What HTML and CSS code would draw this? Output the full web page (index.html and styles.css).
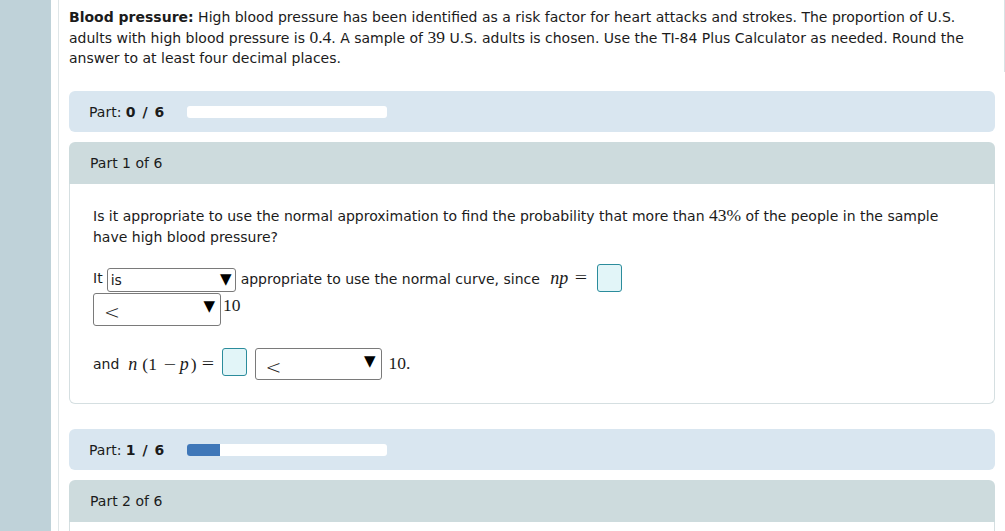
FILE: index.html
```html
<!DOCTYPE html>
<html>
<head>
<meta charset="utf-8">
<link rel="stylesheet" href="styles.css">
</head>
<body>
<div class="sidebar"></div>
<div class="main">
  <div class="intro">
    <p><b>Blood pressure:</b> High blood pressure has been identified as a risk factor for heart attacks and strokes. The proportion of U.S. adults with high blood pressure is <span class="m">0.4</span>. A sample of <span class="m">39</span> U.S. adults is chosen. Use the TI-84 Plus Calculator as needed. Round the answer to at least four decimal places.</p>
  </div>

  <div class="progress">
    <span class="plabel">Part: <b>0 / 6</b></span>
    <div class="track"><div class="fill" style="width:0%"></div></div>
  </div>

  <div class="part">
    <div class="phead">Part 1 of 6</div>
    <div class="pbody">
      <p class="q">Is it appropriate to use the normal approximation to find the probability that more than <span class="m">43%</span> of the people in the sample have high blood pressure?</p>
      <div class="row r1">
        <span>It</span>
        <span class="sel sel-a"><span class="sv">is</span><span class="tri">&#9660;</span></span>
        <span class="txt">appropriate to use the normal curve, since <span class="mi">np</span></span>
        <span class="m eq">=</span>
        <span class="inp inp-a"></span>
      </div>
      <div class="row r2">
        <span class="sel sel-b"><span class="sv lt">&lt;</span><span class="tri">&#9660;</span></span>
        <span class="m ten">10</span>
      </div>
      <div class="row r3">
        <span>and</span>
        <span class="expr"><span class="mi">n</span><span class="m po">(1</span><span class="m minus">&#8722;</span><span class="mi pp">p</span><span class="m pc">)</span></span>
        <span class="m eq">=</span>
        <span class="inp inp-b"></span>
        <span class="sel sel-c"><span class="sv lt">&lt;</span><span class="tri">&#9660;</span></span>
        <span class="m ten">10.</span>
      </div>
    </div>
  </div>

  <div class="progress second">
    <span class="plabel">Part: <b>1 / 6</b></span>
    <div class="track"><div class="fill" style="width:16.67%"></div></div>
  </div>

  <div class="part">
    <div class="phead">Part 2 of 6</div>
    <div class="pbody short"></div>
  </div>
</div>
</body>
</html>
```
FILE: styles.css
```css
html, body {
  margin: 0;
  padding: 0;
  height: 100%;
  overflow: hidden;
}
body {
  display: flex;
  background: #fff;
  font-family: "DejaVu Sans", Verdana, sans-serif;
  font-size: 14px;
  color: #1b1b1b;
}
.sidebar {
  width: 51px;
  flex: none;
  background: #bfd2d9;
}
.main {
  flex: 1;
  margin-left: 7px;
  border-left: 1px solid #dfe6e8;
}
.intro {
  padding: 7px 0 0 10px;
  height: 65px;
  border-right: 1px solid #d9e2e5;
}
.intro p {
  margin: 0;
  line-height: 20.5px;
  width: 920px;
}
.m {
  font-family: "Liberation Serif", "Times New Roman", serif;
  font-size: 17.5px;
  line-height: 1;
}
.mi {
  font-family: "Liberation Serif", "Times New Roman", serif;
  font-style: italic;
  font-size: 18px;
  line-height: 1;
}
.progress {
  margin: 19px 10px 0 10px;
  height: 41px;
  background: #d9e6f0;
  border-radius: 6px;
  display: flex;
  align-items: center;
  padding-left: 20px;
}
.progress.second {
  margin-top: 25px;
}
.plabel {
  width: 98px;
  font-size: 14px;
}
.plabel b {
  word-spacing: 2px;
}
.track {
  width: 200px;
  height: 12px;
  background: #fff;
  border-radius: 3px;
  overflow: hidden;
}
.fill {
  height: 100%;
  background: #3f77b8;
}
.part {
  margin: 10px 10px 0 10px;
}
.phead {
  height: 42px;
  background: #cddbdd;
  border-radius: 6px 6px 0 0;
  display: flex;
  align-items: center;
  padding-left: 21px;
  font-size: 14px;
}
.pbody {
  border: 1px solid #d5dfe1;
  border-top: none;
  border-radius: 0 0 6px 6px;
  height: 220px;
  padding: 22px 23px 0 23px;
  box-sizing: border-box;
}
.pbody.short {
  height: 40px;
  border-bottom: none;
}
.q {
  margin: 0;
  line-height: 21px;
  width: 870px;
}
.row {
  display: flex;
  align-items: center;
}
.r1 {
  margin-top: 16px;
  height: 28px;
}
.r1 > span:first-child {
  margin-right: 4px;
}
.sel {
  display: inline-flex;
  justify-content: space-between;
  box-sizing: border-box;
  border: 1px solid #7a7a7a;
  border-radius: 3px;
  background: #fff;
}
.tri {
  font-size: 15px;
  line-height: 1;
  color: #000;
  font-family: "DejaVu Sans", sans-serif;
}
.sel-a {
  width: 129px;
  height: 24px;
  align-items: center;
  padding: 0 3px 0 3px;
  margin-top: 3px;
}
.sel-a .sv {
  font-size: 14px;
}
.txt {
  margin-left: 5px;
}
.txt .mi {
  margin-left: 6px;
}
.eq {
  margin-left: 8px;
  transform: scaleX(1.25);
}
.inp {
  display: inline-block;
  box-sizing: border-box;
  width: 25px;
  height: 28px;
  border: 1.5px solid #2b8c9c;
  border-radius: 3px;
  background: #e2f5f8;
}
.inp-a {
  margin-left: 11px;
}
.r2 {
  margin-top: 1px;
  align-items: flex-start;
}
.sel-b {
  width: 128px;
  height: 33px;
  padding: 0 5px 0 10px;
}
.sel-b .lt, .sel-c .lt {
  font-family: "DejaVu Sans", sans-serif;
  font-size: 19px;
  font-weight: 300;
  margin-top: 7px;
}
.sel-b .tri, .sel-c .tri {
  margin-top: 5px;
}
.ten {
  margin-left: 2px;
  margin-top: 4px;
}
.r3 {
  margin-top: 22px;
  height: 32px;
}
.expr {
  margin-left: 9px;
  white-space: nowrap;
  display: inline-flex;
  align-items: baseline;
}
.po {
  margin-left: 5px;
}
.minus {
  margin: 0 0 0 8px;
  display: inline-block;
  transform: scaleX(1.25);
}
.pp {
  margin-left: 5px;
}
.pc {
  margin-left: 2px;
}
.r3 .eq {
  margin-left: 6px;
}
.inp-b {
  margin-left: 9px;
  margin-top: -4px;
}
.sel-c {
  width: 127px;
  height: 32px;
  margin-left: 8px;
  padding: 0 5px 0 10px;
}
.r3 .ten {
  margin-left: 7px;
  margin-top: 0;
}
```
